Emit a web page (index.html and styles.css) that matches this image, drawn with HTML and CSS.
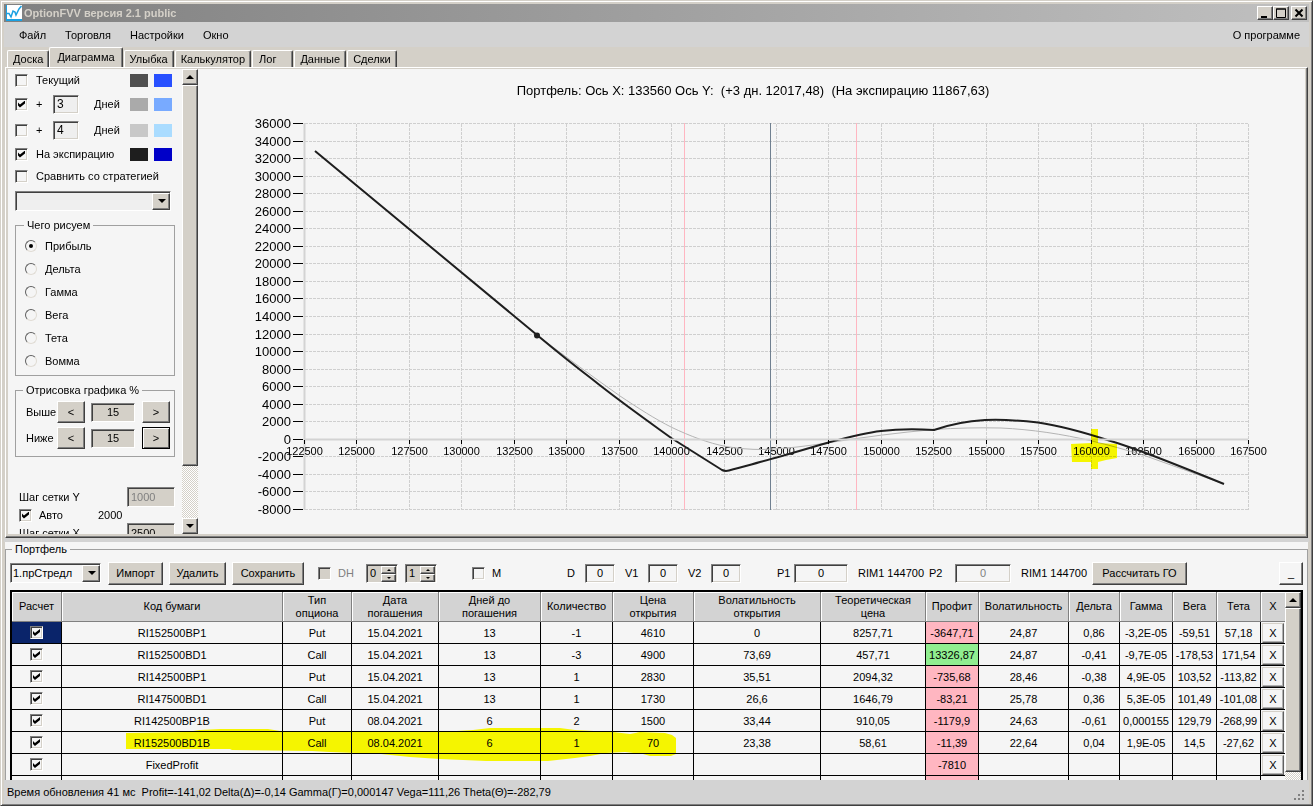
FILE: index.html
```html
<!DOCTYPE html>
<html lang="ru">
<head>
    <meta charset="UTF-8">
    <meta name="viewport" content="width=device-width, initial-scale=1.0">
    <title>OptionFVV версия 2.1 public</title>
    <link rel="stylesheet" href="styles.css">
</head>
<body>
<div class="window">

    <header class="titlebar">
        <svg class="app-icon" width="16" height="16" viewBox="0 0 16 16">
            <rect width="16" height="16" fill="#1ba1e2"/>
            <rect x="1" width="15" height="14" fill="#fff"/>
            <path d="M1 8.5h2l2 3.5 2-6 2 1 1 3 3-6 2.500-3" fill="none" stroke="#1ba1e2" stroke-width="1.500"/>
        </svg>
        <h1>OptionFVV версия 2.1 public</h1>
        <div class="window-buttons">
            <button class="bevel" aria-label="Свернуть"><svg width="10" height="10"><path d="M1 8h6v2H1z"/></svg></button>
            <button class="bevel" aria-label="Развернуть"><svg width="10" height="10"><path d="M.5 1h9v8.500h-9z M0 1h10" fill="none" stroke="#000"/></svg></button>
            <button class="bevel close" aria-label="Закрыть"><svg width="10" height="10"><path d="M1.500 1.500l7 7M8.500 1.500l-7 7" stroke="#000" stroke-width="2"/></svg></button>
        </div>
    </header>

    <nav class="menubar">
        <a href="#">Файл</a>
        <a href="#">Торговля</a>
        <a href="#">Настройки</a>
        <a href="#">Окно</a>
        <a href="#" class="about">О программе</a>
    </nav>

    <div class="tabs" role="tablist">
        <button role="tab">Доска</button>
        <button role="tab" class="active" aria-selected="true">Диаграмма</button>
        <button role="tab">Улыбка</button>
        <button role="tab">Калькулятор</button>
        <button role="tab" class="wide">Лог</button>
        <button role="tab">Данные</button>
        <button role="tab">Сделки</button>
    </div>

    <main class="pane">
        <aside class="sidebar">
            <div class="opt">
                <input type="checkbox" id="cur"><label for="cur">Текущий</label>
                <span class="swatches"><i class="c-gray1"></i><i class="c-blue1"></i></span>
            </div>
            <div class="opt days">
                <input type="checkbox" id="plus1" checked><label for="plus1">+</label>
                <input type="text" class="sunken" id="days1" value="3"><label for="days1">Дней</label>
                <span class="swatches"><i class="c-gray2"></i><i class="c-blue2"></i></span>
            </div>
            <div class="opt days">
                <input type="checkbox" id="plus2"><label for="plus2">+</label>
                <input type="text" class="sunken" id="days2" value="4"><label for="days2">Дней</label>
                <span class="swatches"><i class="c-gray3"></i><i class="c-blue3"></i></span>
            </div>
            <div class="opt">
                <input type="checkbox" id="exp" checked><label for="exp">На экспирацию</label>
                <span class="swatches"><i class="c-gray4"></i><i class="c-blue4"></i></span>
            </div>
            <div class="opt">
                <input type="checkbox" id="cmp"><label for="cmp">Сравнить со стратегией</label>
            </div>
            <div class="combo strategy">
                <select aria-label="Стратегия"><option></option></select>
            </div>

            <fieldset class="greeks">
                <legend>Чего рисуем</legend>
                <label><input type="radio" name="greek" checked>Прибыль</label>
                <label><input type="radio" name="greek">Дельта</label>
                <label><input type="radio" name="greek">Гамма</label>
                <label><input type="radio" name="greek">Вега</label>
                <label><input type="radio" name="greek">Тета</label>
                <label><input type="radio" name="greek">Вомма</label>
            </fieldset>

            <fieldset class="range">
                <legend>Отрисовка графика %</legend>
                <div class="range-row">
                    <label for="up">Выше</label>
                    <button class="bevel">&lt;</button>
                    <input type="text" class="sunken" id="up" value="15">
                    <button class="bevel">&gt;</button>
                </div>
                <div class="range-row">
                    <label for="down">Ниже</label>
                    <button class="bevel">&lt;</button>
                    <input type="text" class="sunken" id="down" value="15">
                    <button class="bevel focused">&gt;</button>
                </div>
            </fieldset>

            <div class="step">
                <label for="stepY">Шаг сетки Y</label>
                <input type="text" class="sunken" id="stepY" value="1000" disabled>
            </div>
            <div class="auto">
                <input type="checkbox" id="auto" checked><label for="auto">Авто</label>
                <span>2000</span>
            </div>
            <div class="step">
                <label for="stepX">Шаг сетки X</label>
                <input type="text" class="sunken" id="stepX" value="2500">
            </div>
        </aside>

        <div class="scrollbar side-scroll">
            <button class="bevel" aria-label="Вверх"><i class="tri up"></i></button>
            <div class="thumb bevel"></div>
            <div class="track"></div>
            <button class="bevel" aria-label="Вниз"><i class="tri down"></i></button>
        </div>

        <svg class="chart" viewBox="198 69 1107 465">
            <text class="chart-title" x="753" y="95">Портфель: Ось X: 133560 Ось Y: &#160;(+3 дн. 12017,48) &#160;(На экспирацию 11867,63)</text>
            <g id="grid" class="grid"></g>
            <path class="axis" d="M304.500 123V510"/>
            <path class="bound" d="M684.500 123V510M856.500 123V510"/>
            <path class="price" d="M770.500 123V510"/>
            <g id="labels"></g>
            <path class="line-days" d="M315 151L537 335C566 357 593 377 620 396C638 408 655 419 672 427.500C690 436 708 443 726 446.500C738 448.500 750 449.500 762 449.500C785 449 807 446 830 442.500C865 437 899 432.500 934 429.500C956 428 978 427.500 1001 428C1032 429.500 1062 434 1092 441C1109 445 1126 450 1143 455C1170 465 1197 474 1224 484"/>
            <path class="line-exp" d="M315 151L537 335C555 350 573 364.500 592 379C618 400 645 419 672 438.500L722 470Q725 471.500 729 470.500C740 467.500 750 465 760 462C783 456 806 449 830 442C847 437.500 864 433 881 431C898 429 916 429 934 430C951 424 968 421 985 420C1003 419 1020 420.500 1038 422.500C1062 426 1086 433 1109 440.500C1121 444 1132 448 1143 452C1170 462 1197 473 1224 484"/>
            <circle cx="537" cy="335.500" r="3" fill="#1e1e1e"/>
            <path class="axis" d="M304 439.500H1248"/>
            <g id="ticks" class="ticks"></g>
            <path class="marker" d="M1071 444L1091 443V429H1098V443L1117 444V458L1106 460L1098 462V469H1091V462H1072Z"/>
        </svg>
    </main>

    <div class="splitter"></div>

    <section class="lower">
        <fieldset class="portfolio">
            <legend>Портфель</legend>
            <div class="toolbar">
                <div class="combo preset">
                    <select aria-label="Портфель"><option>1.прСтредл</option></select>
                </div>
                <button class="bevel import">Импорт</button>
                <button class="bevel delete">Удалить</button>
                <button class="bevel save">Сохранить</button>
                <label class="check dh"><input type="checkbox" disabled>DH</label>
                <span class="spinner"><input type="text" value="0" aria-label="DH 1"><span><button class="bevel" aria-label="Больше"><i class="tri up"></i></button><button class="bevel" aria-label="Меньше"><i class="tri down"></i></button></span></span>
                <span class="spinner"><input type="text" value="1" aria-label="DH 2"><span><button class="bevel" aria-label="Больше"><i class="tri up"></i></button><button class="bevel" aria-label="Меньше"><i class="tri down"></i></button></span></span>
                <label class="check market"><input type="checkbox">M</label>
                <label class="field first"><span>D</span><input type="text" class="sunken" value="0"></label>
                <label class="field"><span>V1</span><input type="text" class="sunken" value="0"></label>
                <label class="field"><span>V2</span><input type="text" class="sunken" value="0"></label>
                <label class="field price1"><span>P1</span><input type="text" class="sunken" value="0"></label>
                <span class="ticker">RIM1 144700</span>
                <label class="field price2"><span>P2</span><input type="text" class="sunken" value="0" disabled></label>
                <span class="ticker">RIM1 144700</span>
                <button class="bevel calc">Рассчитать ГО</button>
                <button class="bevel collapse">_</button>
            </div>

            <div class="grid-box">
                <div class="table-wrap">
                    <table>
                        <colgroup>
                            <col class="w50"><col><col class="w69"><col class="w87"><col class="w102"><col class="w72">
                            <col class="w81"><col class="w127"><col class="w105"><col class="w53"><col class="w90">
                            <col class="w51"><col class="w53"><col class="w44"><col class="w44"><col class="w24">
                        </colgroup>
                        <thead>
                            <tr>
                                <th>Расчет</th><th>Код бумаги</th><th>Тип<br>опциона</th><th>Дата<br>погашения</th>
                                <th>Дней до<br>погашения</th><th>Количество</th><th>Цена<br>открытия</th>
                                <th>Волатильность<br>открытия</th><th>Теоретическая<br>цена</th><th>Профит</th>
                                <th>Волатильность</th><th>Дельта</th><th>Гамма</th><th>Вега</th><th>Тета</th><th>X</th>
                            </tr>
                        </thead>
                        <tbody id="rows"></tbody>
                    </table>
                    <svg class="highlight" width="552" height="36" viewBox="126 728 552 36">
                        <path d="M126 734L186 733L200 731L220 730H268L280 732H313L352 733L440 733L473 731L490 729H560L575 731L613 733L630 735L640 733L665 734L672 736L676 739V755L671 757H650L643 755L625 753L606 754L590 757L575 759L548 762H486L440 760L410 758L381 755L330 753L312 752L232 751L230 750H126Z"/>
                    </svg>
                </div>
                <div class="scrollbar table-scroll">
                    <button class="bevel" aria-label="Вверх"><i class="tri up"></i></button>
                    <div class="thumb bevel"></div>
                    <div class="track"></div>
                </div>
            </div>
        </fieldset>
    </section>

    <footer class="statusbar">
        <span>Время обновления 41 мс &#160;Profit=-141,02 Delta(Δ)=-0,14 Gamma(Г)=0,000147 Vega=111,26 Theta(Θ)=-282,79</span>
        <svg width="11" height="11"><path d="M8 0h2v2h-2zM4 4h2v2h-2zM8 4h2v2h-2zM0 8h2v2h-2zM4 8h2v2h-2zM8 8h2v2h-2z" fill="#808080"/></svg>
    </footer>
</div>

<script src="script.js"></script>
</body>
</html>
```
FILE: styles.css
```css
* {
    box-sizing: border-box;
}

body {
    margin: 0;
    font-family: "Liberation Sans", Arial, sans-serif;
    font-size: 11px;
    line-height: 14px;
    color: #000;
    background-color: #d4d0c8;
}

button, input, select {
    font: inherit;
    color: inherit;
    margin: 0;
    padding: 0;
    border-radius: 0;
    outline: none;
}

a {
    color: inherit;
    text-decoration: none;
}

.window {
    display: flex;
    flex-direction: column;
    height: 100vh;
    padding: 3px 3px 1px;
    background-color: #d4d0c8;
    border: 1px solid;
    border-color: #d4d0c8 #404040 #404040 #d4d0c8;
    box-shadow: inset 1px 1px #fff, inset -1px -1px #808080;
}

/* Shared bits */
.bevel {
    display: flex;
    align-items: center;
    justify-content: center;
    background-color: #d4d0c8;
    border: 1px solid;
    border-color: #fff #404040 #404040 #fff;
    box-shadow: inset -1px -1px #808080;
}

.sunken {
    background-color: #efefef;
    border: 1px solid;
    border-color: #808080 #fff #fff #808080;
    box-shadow: inset 1px 1px #404040, inset -1px -1px #d4d0c8;
}

input:disabled {
    color: #808080;
}

input[type="checkbox"] {
    appearance: none;
    flex: none;
    width: 13px;
    height: 13px;
    padding: 2px;
    background-color: #f5f5f5;
    border: 1px solid;
    border-color: #808080 #fff #fff #808080;
    box-shadow: inset 1px 1px #404040, inset -1px -1px #d4d0c8;
}

input[type="checkbox"]:disabled {
    background-color: #d4d0c8;
}

input[type="checkbox"]:checked::before {
    content: "";
    display: block;
    width: 7px;
    height: 7px;
    background-color: #000;
    clip-path: polygon(0 28%, 28% 58%, 100% 0, 100% 42%, 28% 100%, 0 72%);
}

input[type="radio"] {
    appearance: none;
    width: 12px;
    height: 12px;
    padding: 3px;
    background-color: #f5f5f5;
    border: 1px solid;
    border-color: #606060 #e0dcd4 #e0dcd4 #606060;
    border-radius: 50%;
}

input[type="radio"]:checked::before {
    content: "";
    display: block;
    width: 4px;
    height: 4px;
    border-radius: 50%;
    background-color: #000;
}

.tri {
    border: 4px solid transparent;
}

.tri.up {
    border-top: none;
    border-bottom-color: #000;
}

.tri.down {
    border-bottom: none;
    border-top-color: #000;
}

.combo {
    position: relative;
    height: 20px;
    border: 1px solid;
    border-color: #808080 #fff #fff #808080;
    box-shadow: inset 1px 1px #404040;
    background-color: #efefef;
}

.combo select {
    appearance: none;
    width: 100%;
    height: 100%;
    padding-left: 2px;
    border: none;
    background: none;
}

.combo::before {
    content: "";
    position: absolute;
    top: 1px;
    right: 0;
    bottom: 0;
    width: 16px;
    background-color: #d4d0c8;
    border: 1px solid;
    border-color: #fff #404040 #404040 #fff;
    box-shadow: inset -1px -1px #808080;
    pointer-events: none;
}

.combo::after {
    content: "";
    position: absolute;
    top: 7px;
    right: 4px;
    border: 4px solid transparent;
    border-top-color: #000;
    border-bottom: none;
    pointer-events: none;
}

fieldset {
    min-width: 0;
    margin: 0;
    padding: 0;
    border: 1px solid #a0a0a0;
}

legend {
    padding: 0 3px;
}

.scrollbar {
    display: flex;
    flex-direction: column;
    flex: none;
    width: 16px;
}

.scrollbar button {
    flex: none;
    height: 16px;
}

.scrollbar .track {
    flex: 1;
    background: repeating-conic-gradient(#fff 0 25%, #d4d0c8 0 50%) 0 0 / 2px 2px;
}

/* Title bar and menu */
.titlebar {
    display: flex;
    align-items: center;
    flex: none;
    height: 18px;
    padding: 0 2px;
    background: linear-gradient(to right, #808080, #c0c0c0);
}

.titlebar h1 {
    flex: 1;
    margin: 0 0 0 2px;
    font-size: 11px;
    color: #d4d0c8;
}

.window-buttons {
    display: flex;
}

.window-buttons button {
    width: 16px;
    height: 14px;
}

.window-buttons .close {
    margin-left: 2px;
}

.menubar {
    display: flex;
    align-items: center;
    flex: none;
    gap: 19px;
    height: 25px;
    padding: 0 9px 0 15px;
    background-color: #d3d3d3;
}

.menubar .about {
    margin-left: auto;
}

.tabs {
    display: flex;
    align-items: flex-end;
    flex: none;
    height: 20px;
    padding-left: 3px;
}

.tabs button {
    height: 17px;
    margin-right: 1px;
    padding: 0 5px;
    background-color: #d4d0c8;
    border: 1px solid;
    border-color: #fff #404040 transparent #fff;
    border-bottom: none;
    box-shadow: inset -1px 0 #808080;
    border-radius: 2px 2px 0 0;
}

.tabs .active {
    height: 20px;
    padding: 0 7px 2px;
    margin-left: -1px;
}

.tabs .wide {
    padding: 0 16px 0 6px;
}

/* Upper pane: options and chart */
.pane {
    display: flex;
    flex: 465 1 0;
    min-height: 0;
    margin: 0 1px;
    padding: 1px 2px 3px;
    background-color: #d4d0c8;
    border: 1px solid;
    border-color: #fff #404040 #404040 #fff;
    box-shadow: inset -1px -1px #808080;
}

.sidebar {
    flex: none;
    width: 174px;
    padding: 0 7px;
    overflow: hidden;
    background-color: #f5f5f5;
}

.opt {
    display: flex;
    align-items: center;
    height: 22px;
    padding-right: 3px;
}

.opt input[type="checkbox"] {
    margin-right: 8px;
}

.opt.days {
    height: 26px;
}

.opt.days label:first-of-type {
    width: 17px;
}

.opt.days .sunken {
    width: 26px;
    height: 19px;
    margin-right: 15px;
    padding-left: 3px;
    font-size: 12px;
}

.swatches {
    display: flex;
    gap: 6px;
    margin-left: auto;
}

.swatches i {
    width: 18px;
    height: 13px;
}

.c-gray1 { background-color: #505050; }
.c-gray2 { background-color: #aaaaaa; }
.c-gray3 { background-color: #c8c8c8; }
.c-gray4 { background-color: #1e1e1e; }
.c-blue1 { background-color: #2850ff; }
.c-blue2 { background-color: #78aaff; }
.c-blue3 { background-color: #aadcff; }
.c-blue4 { background-color: #0000c8; }

.strategy {
    margin: 4px 4px 0 0;
}

.greeks {
    margin-top: 7px;
    padding: 2px 9px 3px;
}

.greeks label {
    display: flex;
    align-items: center;
    gap: 8px;
    height: 23px;
}

.greeks legend {
    margin-left: -1px;
}

.range {
    margin-top: 7px;
    padding: 4px 4px 7px 10px;
}

.range legend {
    margin-left: -3px;
}

.range-row {
    display: flex;
    align-items: center;
    height: 22px;
}

.range-row + .range-row {
    margin-top: 4px;
}

.range-row label {
    width: 31px;
}

.range-row button {
    width: 28px;
    height: 22px;
}

.range-row .focused {
    border-color: #000;
    box-shadow: inset 1px 1px #fff, inset -1px -1px #606060;
}

.range-row input {
    width: 44px;
    height: 19px;
    margin: 0 7px 0 6px;
    text-align: center;
    background-color: #d4d0c8;
}

.step {
    display: flex;
    align-items: center;
    justify-content: space-between;
    height: 20px;
    padding-left: 4px;
}

.range + .step {
    margin-top: 30px;
}

.step input {
    width: 48px;
    height: 20px;
    padding-left: 3px;
    background-color: #d4d0c8;
}

.auto {
    display: flex;
    align-items: center;
    height: 16px;
    padding-left: 4px;
}

.auto label {
    width: 66px;
    padding-left: 7px;
}

.side-scroll .thumb {
    height: 82%;
}

/* Chart */
.chart {
    flex: 1;
    min-width: 0;
    height: 100%;
    background-color: #f5f5f5;
    font-size: 11px;
}

.chart-title {
    font-size: 13px;
    text-anchor: middle;
}

.grid {
    fill: none;
    stroke: #cfcfcf;
    stroke-dasharray: 3 1;
    shape-rendering: crispEdges;
}

.axis {
    stroke: #d3d3d3;
    stroke-width: 2;
}

.bound {
    stroke: #ffb6c1;
}

.price {
    stroke: #708090;
}

.label-x {
    text-anchor: middle;
}

.label-y {
    font-size: 13px;
    text-anchor: end;
}

.ticks {
    stroke: #000;
}

.line-days {
    fill: none;
    stroke: #b4b4b4;
}

.line-exp {
    fill: none;
    stroke: #1e1e1e;
    stroke-width: 2;
}

.marker, .highlight {
    fill: #ffff00;
    mix-blend-mode: multiply;
}

.splitter {
    flex: none;
    height: 4px;
    background-color: #d3d3d3;
}

/* Lower pane: portfolio */
.lower {
    display: flex;
    flex: 238 1 0;
    min-height: 0;
    margin: 0 1px;
    background-color: #f5f5f5;
}

.portfolio {
    display: flex;
    flex-direction: column;
    flex: 1;
    min-height: 0;
    padding: 0 4px;
    border-bottom: none;
    overflow: hidden;
}

.portfolio legend {
    margin-left: 2px;
}

.toolbar {
    display: flex;
    align-items: center;
    flex: none;
    height: 26px;
    margin: 4px 0;
}

.toolbar .preset {
    width: 91px;
    margin-right: 7px;
    background-color: #f5f5f5;
}

.toolbar > button {
    height: 23px;
}

.toolbar .import {
    width: 55px;
    margin-right: 6px;
}

.toolbar .delete {
    width: 57px;
    margin-right: 6px;
}

.toolbar .save {
    width: 72px;
    margin-right: 14px;
}

.check {
    display: flex;
    align-items: center;
    gap: 7px;
}

.dh {
    width: 48px;
    color: #808080;
}

.market {
    width: 95px;
    margin-left: 35px;
}

.spinner {
    display: flex;
    width: 32px;
    height: 19px;
    padding: 1px;
    background-color: #d4d0c8;
    border: 1px solid;
    border-color: #808080 #fff #fff #808080;
    box-shadow: inset 1px 1px #404040;
}

.spinner + .spinner {
    margin-left: 7px;
}

.spinner input {
    flex: 1;
    width: 0;
    padding-left: 2px;
    border: none;
    background: none;
}

.spinner button {
    width: 15px;
    height: 8px;
}

.spinner .tri {
    border-width: 2px;
}

.spinner .tri.up {
    border-top: none;
}

.spinner .tri.down {
    border-bottom: none;
}

.field {
    display: flex;
    align-items: center;
    margin-left: 10px;
}

.field span {
    width: 23px;
}

.field input {
    width: 30px;
    height: 19px;
    text-align: center;
    background-color: #f5f5f5;
}

.field.first {
    margin-left: 0;
}

.field.first span {
    width: 18px;
}

.price1 {
    margin-left: 36px;
}

.price1 span {
    width: 17px;
}

.price1 input {
    width: 54px;
}

.price2 {
    margin-left: 0;
}

.price2 span {
    width: 26px;
}

.price2 input {
    width: 56px;
}

.ticker {
    width: 71px;
    margin-left: 10px;
    white-space: nowrap;
}

.toolbar .calc {
    width: 95px;
}

.toolbar .collapse {
    width: 24px;
    margin-left: auto;
    background-color: #f5f5f5;
}

.grid-box {
    display: flex;
    flex: 1;
    min-height: 0;
    border: solid #000;
    border-width: 2px 2px 0;
    overflow: hidden;
}

.table-wrap {
    position: relative;
    flex: 1;
    min-width: 0;
}

table {
    width: 100%;
    table-layout: fixed;
    border-collapse: separate;
    border-spacing: 0;
}

th {
    height: 30px;
    padding: 0;
    font-weight: normal;
    line-height: 13px;
    white-space: nowrap;
    background-color: #d3d3d3;
    border: solid #808080;
    border-width: 0 1px 1px 0;
    box-shadow: inset 1px 1px #fff;
}

td {
    height: 22px;
    padding: 0;
    text-align: center;
    white-space: nowrap;
    border: solid #000;
    border-width: 0 1px 1px 0;
}

td input[type="checkbox"] {
    display: block;
    margin: 0 auto;
}

td .bevel {
    width: 22px;
    height: 20px;
    margin-left: 1px;
    background-color: #f5f5f5;
    border-color: #d4d0c8 #606060 #606060 #d4d0c8;
    box-shadow: inset -1px -1px #b0b0b0;
}

th:last-child, td:last-child {
    border-right: none;
}

.selected {
    background-color: #0a246a;
}

.loss {
    background-color: #ffb6c1;
}

.gain {
    background-color: #90ee90;
}

.w24 { width: 24px; }
.w44 { width: 44px; }
.w50 { width: 50px; }
.w51 { width: 51px; }
.w53 { width: 53px; }
.w69 { width: 69px; }
.w72 { width: 72px; }
.w81 { width: 81px; }
.w87 { width: 87px; }
.w90 { width: 90px; }
.w102 { width: 102px; }
.w105 { width: 105px; }
.w127 { width: 127px; }

.highlight {
    position: absolute;
    top: 135px;
    left: 114px;
}

.table-scroll .thumb {
    height: 164px;
}

/* Status bar */
.statusbar {
    display: flex;
    align-items: center;
    justify-content: space-between;
    flex: none;
    height: 24px;
    padding: 0 4px 0 3px;
    background-color: #d3d3d3;
}

.statusbar svg {
    align-self: flex-end;
    margin-bottom: 3px;
}
```
FILE: script.js
```javascript
const svgNS = 'http://www.w3.org/2000/svg';
const left = 304.5;
const right = 1248.5;
const minX = 122500;
const maxX = 167500;
const topY = 123.5;
const bottomY = 509.5;
const minY = -8000;
const maxY = 36000;

function add(parent, tag, attrs, text) {
    const el = document.createElementNS(svgNS, tag);
    for (const key in attrs) {
        el.setAttribute(key, attrs[key]);
    }
    if (text !== undefined) {
        el.textContent = text;
    }
    document.getElementById(parent).appendChild(el);
}

// Horizontal grid lines and Y labels
for (let v = minY; v <= maxY; v += 2000) {
    const y = Math.floor(bottomY - (v - minY) / (maxY - minY) * (bottomY - topY)) + 0.5;
    add('grid', 'path', { d: `M${left} ${y}H${right}` });
    add('ticks', 'path', { d: `M293 ${y}H303` });
    add('labels', 'text', { x: 291, y: y + 4.5, class: 'label-y' }, v);
}

// Vertical grid lines and X labels
for (let v = minX; v <= maxX; v += 2500) {
    const x = Math.floor(left + (v - minX) / (maxX - minX) * (right - left)) + 0.5;
    add('grid', 'path', { d: `M${x} ${topY}V${bottomY}` });
    add('ticks', 'path', { d: `M${x} 440V444` });
    add('labels', 'text', { x: x, y: 455, class: 'label-x' }, v);
}

const rows = [
    ['RI152500BP1', 'Put', '15.04.2021', '13', '-1', '4610', '0', '8257,71', '-3647,71', '24,87', '0,86', '-3,2E-05', '-59,51', '57,18'],
    ['RI152500BD1', 'Call', '15.04.2021', '13', '-3', '4900', '73,69', '457,71', '13326,87', '24,87', '-0,41', '-9,7E-05', '-178,53', '171,54'],
    ['RI142500BP1', 'Put', '15.04.2021', '13', '1', '2830', '35,51', '2094,32', '-735,68', '28,46', '-0,38', '4,9E-05', '103,52', '-113,82'],
    ['RI147500BD1', 'Call', '15.04.2021', '13', '1', '1730', '26,6', '1646,79', '-83,21', '25,78', '0,36', '5,3E-05', '101,49', '-101,08'],
    ['RI142500BP1B', 'Put', '08.04.2021', '6', '2', '1500', '33,44', '910,05', '-1179,9', '24,63', '-0,61', '0,000155', '129,79', '-268,99'],
    ['RI152500BD1B', 'Call', '08.04.2021', '6', '1', '70', '23,38', '58,61', '-11,39', '22,64', '0,04', '1,9E-05', '14,5', '-27,62'],
    ['FixedProfit', '', '', '', '', '', '', '', '-7810', '', '', '', '', '']
];

const body = document.getElementById('rows');
rows.forEach((row, i) => {
    let html = `<td class="${i === 0 ? 'selected' : ''}"><input type="checkbox" checked aria-label="${row[0]}"></td>`;
    row.forEach((value, col) => {
        let cls = '';
        if (col === 8) {
            cls = value.startsWith('-') ? 'loss' : 'gain';
        }
        html += `<td class="${cls}">${value}</td>`;
    });
    html += '<td><button class="bevel">X</button></td>';
    body.insertAdjacentHTML('beforeend', `<tr>${html}</tr>`);
});

// Empty totals row at the bottom
body.insertAdjacentHTML('beforeend', '<tr>' + '<td></td>'.repeat(9) + '<td class="loss"></td>' + '<td></td>'.repeat(6) + '</tr>');
```
